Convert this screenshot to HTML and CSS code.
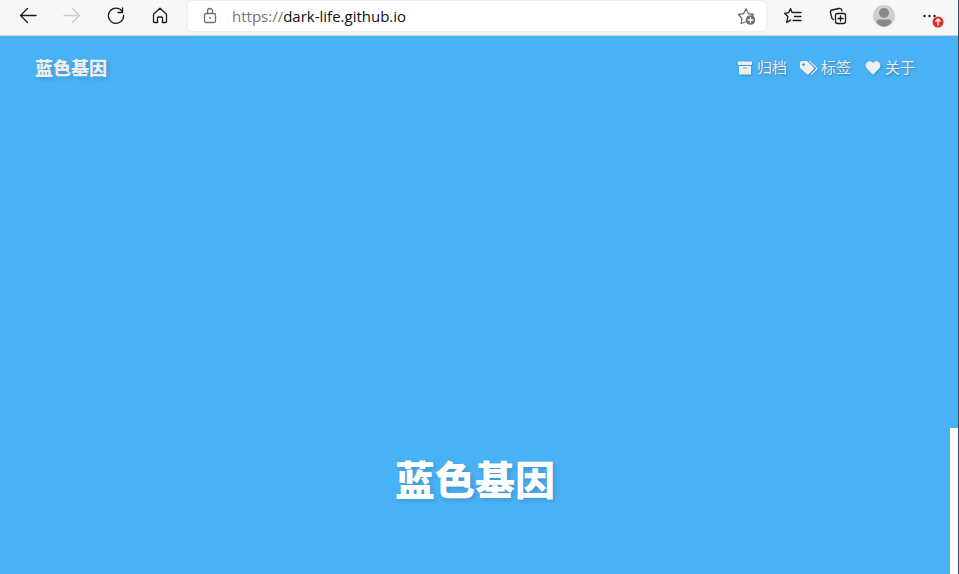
FILE: index.html
```html
<!DOCTYPE html>
<html lang="zh-CN">
<head>
<meta charset="utf-8">
<meta name="viewport" content="width=device-width, initial-scale=1">
<title>蓝色基因</title>
<link rel="stylesheet" href="styles.css">
</head>
<body>
<div class="window">
  <div class="toolbar">
    <div class="controls">
      <button class="tool" type="button" aria-label="Back">
        <svg width="24" height="24" viewBox="0 0 24 24"><path d="M20 11.5H4.5M11.5 4.5l-7 7 7 7"/></svg>
      </button>
      <button class="tool" type="button" aria-label="Forward" disabled>
        <svg width="24" height="24" viewBox="0 0 24 24"><path d="M4 11.5h15.500M12.500 4.500l7 7-7 7"/></svg>
      </button>
      <button class="tool" type="button" aria-label="Refresh">
        <svg width="24" height="24" viewBox="0 0 24 24"><path d="M18.300 7.500A7.600 7.600 0 1 0 19.600 11.500M18.500 4v4.500H14"/></svg>
      </button>
      <button class="tool" type="button" aria-label="Home">
        <svg width="24" height="24" viewBox="0 0 24 24"><path d="M5.500 10.200 12 4.200l6.500 6v7.300a1 1 0 0 1-1 1h-3v-4.500a1 1 0 0 0-1-1h-3a1 1 0 0 0-1 1v4.500h-3a1 1 0 0 1-1-1z"/></svg>
      </button>
    </div>
    <div class="address">
      <svg class="lock" width="16" height="18" viewBox="0 0 16 18"><rect x="2.500" y="6.500" width="11" height="9" rx="1.500"/><path d="M5.500 6.500V4a2.500 2.500 0 0 1 5 0v2.500"/><circle class="solid" cx="8" cy="11" r="1"/></svg>
      <a class="url" href="#top"><span class="scheme">https://</span>dark-life.github.io</a>
      <button class="favorite" type="button" aria-label="Add to favorites">
        <svg width="20" height="20" viewBox="0 0 20 20"><path d="M8.500 16 4.200 17.500l.8-5.300L1.500 8.500l5-.8L9 2.800l2.500 4.900 5 .8-1.500 1.500"/><circle class="solid" cx="13.500" cy="14" r="4.800"/><path class="plus" d="M13.500 11.500v5M11 14h5"/></svg>
      </button>
    </div>
    <div class="actions">
      <button class="tool" type="button" aria-label="Favorites">
        <svg width="24" height="24" viewBox="0 0 24 24"><path d="M12.500 8.500 11 8.400 9.500 4.500 7.800 8.600l-4.300.7 3.400 3.500-1.200 5.700 4-2.400M13.500 8.500h6.500M13.500 12.500h6.500M12 16.500h8"/></svg>
      </button>
      <button class="tool" type="button" aria-label="Collections">
        <svg width="24" height="24" viewBox="0 0 24 24"><rect x="8.500" y="9.500" width="10" height="10" rx="2"/><path d="M13.500 12v5M11 14.500h5M6.500 15.500 5 14.500 3.500 8.500q-.4-2 1.500-2.500l7-1.500q2-.4 2.700 1.500l.3 1"/></svg>
      </button>
      <button class="tool profile" type="button" aria-label="Profile">
        <svg width="24" height="24" viewBox="0 0 24 24"><circle class="disc" cx="11" cy="12" r="11"/><circle class="person" cx="11" cy="9" r="5"/><path class="person" d="M3.500 18.500q0-3 3-3h9q3 0 3 3-3 4-7.500 4t-7.500-4z"/></svg>
      </button>
      <button class="tool menu" type="button" aria-label="Settings and more">
        <svg width="24" height="24" viewBox="0 0 24 24"><circle class="dot" cx="5.500" cy="12" r="1.200"/><circle class="dot" cx="10.500" cy="12" r="1.200"/><circle class="dot" cx="15.500" cy="12" r="1.200"/></svg>
        <svg class="update" width="12" height="12" viewBox="0 0 12 12"><circle cx="6" cy="6" r="5.500"/><path d="M6 9V3.300M3.800 5.300 6 3l2.200 2.300"/></svg>
      </button>
    </div>
  </div>
  <div class="page" id="top">
    <div class="hero">
      <header class="site-header">
        <a class="brand" href="#top">蓝色基因</a>
        <nav class="site-nav">
          <a href="#archives"><svg width="18" height="20" viewBox="0 0 18 20"><path d="M2 4.500h14v3.500H2zM3 9h12v8.500H3z"/><path class="cut" d="M7 11h4"/></svg>归档</a>
          <a href="#tags"><svg width="18" height="20" viewBox="0 0 18 20"><g transform="translate(0 2)"><path fill-rule="evenodd" d="M0 3.500Q0 2 1.500 2H7l6.700 6.500q.8.900 0 1.800l-5 5q-.9.800-1.800 0L0 9zM3.600 4.200a1.400 1.400 0 1 0 .01 0z"/><path d="M8.500 2H10l7.200 6.700q.8.800 0 1.700l-5.400 5.200q-.8.500-1.400-.1l5.400-5.500q.6-.6 0-1.200z"/></g></svg>标签</a>
          <a href="#about"><svg width="18" height="20" viewBox="0 0 18 20"><path d="M9 6C10.500 3.800 13.500 3.700 15.200 5.400s1.700 4.400 0 6.100L9 17.800 2.800 11.500C1.100 9.800 1.100 7.100 2.800 5.400S7.500 3.800 9 6z"/></svg>关于</a>
        </nav>
      </header>
      <h1 class="title">蓝色基因</h1>
    </div>
    <div class="scrollbar"><div class="thumb"></div></div>
  </div>
</div>
</body>
</html>
```
FILE: styles.css
```css
* {
  box-sizing: border-box;
}

body {
  margin: 0;
  font-family: "Noto Sans CJK SC", sans-serif;
}

a {
  color: inherit;
  text-decoration: none;
}

button {
  display: block;
  padding: 0;
  border: 0;
  background: none;
}

svg {
  display: block;
  flex: none;
}

.window {
  display: flex;
  flex-direction: column;
  min-height: 100vh;
  border-right: 1px solid #3c4961;
}

.toolbar {
  display: flex;
  align-items: flex-start;
  height: 36px;
  padding: 0 15px 0 16px;
  border-bottom: 1px solid #d0d0d0;
  background: #f7f7f7;
}

.toolbar svg {
  fill: none;
  stroke: #1b1b1b;
  stroke-width: 1.3;
  stroke-linecap: round;
  stroke-linejoin: round;
}

.controls,
.actions {
  display: flex;
  gap: 20px;
  padding-top: 4px;
}

.controls {
  margin-right: 16px;
}

.actions {
  gap: 22px;
  margin-left: 15px;
}

.tool {
  position: relative;
}

.tool:disabled svg {
  stroke: #cccccc;
}

.address {
  display: flex;
  flex: 1;
  align-items: center;
  height: 30px;
  margin-top: 1px;
  padding: 0 9px 0 14px;
  border-radius: 4px;
  background: #ffffff;
  box-shadow: 0 0 3px #e2e2e2;
}

.address svg {
  stroke: #6e6e6e;
}

.address .solid {
  fill: #6e6e6e;
  stroke: none;
}

.address .plus {
  stroke: #ffffff;
}

.url {
  flex: 1;
  margin-left: 14px;
  color: #101010;
  font-family: "Open Sans", "Noto Sans", sans-serif;
  font-size: 15px;
  line-height: 30px;
}

.scheme {
  color: #757575;
}

.toolbar .disc {
  fill: #d2d0ce;
  stroke: none;
}

.toolbar .person {
  fill: #8a8886;
  stroke: none;
}

.toolbar .dot {
  fill: #1b1b1b;
  stroke: none;
}

.toolbar .update {
  position: absolute;
  right: -1px;
  bottom: 0;
  fill: #d93025;
  stroke: #ffffff;
}

.toolbar .update circle {
  stroke: none;
}

.page {
  display: flex;
  flex: 1;
  background: #49b1f5;
}

.hero {
  display: flex;
  flex: 1;
  flex-direction: column;
}

.site-header {
  display: flex;
  align-items: center;
  justify-content: space-between;
  height: 61px;
  padding: 0 35px;
  color: #eeeeee;
}

.brand {
  font-size: 18px;
  font-weight: 900;
  text-shadow: 2px 2px 4px rgba(0, 0, 0, 0.15);
}

.site-nav {
  display: flex;
  gap: 13px;
  font-size: 15px;
  text-shadow: 1px 1px 2px rgba(0, 0, 0, 0.3);
}

.site-nav a {
  display: flex;
  align-items: center;
  gap: 3px;
}

.site-nav svg {
  fill: #eeeeee;
  filter: drop-shadow(1px 1px 1px rgba(0, 0, 0, 0.2));
}

.site-nav .cut {
  stroke: #49b1f5;
  stroke-width: 1;
}

.title {
  margin: auto 0 66px;
  color: #ffffff;
  font-size: 40px;
  font-weight: 900;
  line-height: 60px;
  text-align: center;
  text-shadow: 2px 2px 4px rgba(0, 0, 0, 0.15);
}

.scrollbar {
  width: 8px;
  background: #ffffff;
}

.thumb {
  height: 72.8%;
  background: #49b1f5;
}
```
